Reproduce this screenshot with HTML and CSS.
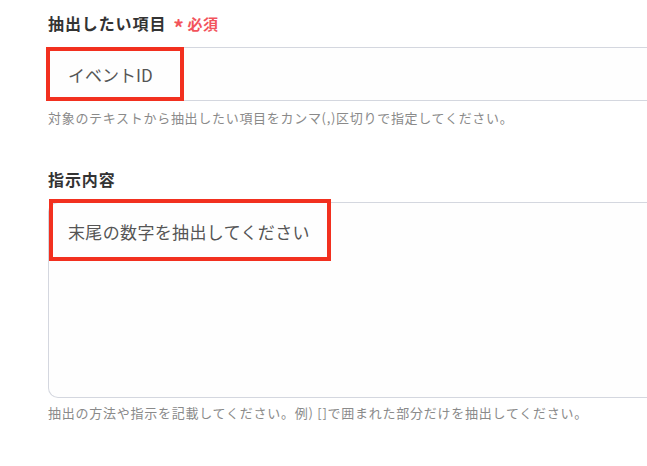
FILE: index.html
```html
<!DOCTYPE html>
<html lang="ja">
<head>
<meta charset="utf-8">
<link rel="stylesheet" href="styles.css">
</head>
<body>
<div class="form">
  <div class="field">
    <div class="label">抽出したい項目<span class="req"><span class="ast">*</span>必須</span></div>
    <div class="input">
      <span class="value">イベントID</span>
      <div class="highlight hl-input"></div>
    </div>
    <div class="help">対象のテキストから抽出したい項目をカンマ(,)区切りで指定してください。</div>
  </div>
  <div class="field field-2">
    <div class="label">指示内容</div>
    <div class="textarea">
      <span class="value value-area">末尾の数字を抽出してください</span>
      <div class="highlight hl-area"></div>
    </div>
    <div class="help help-2">抽出の方法や指示を記載してください。例) []で囲まれた部分だけを抽出してください。</div>
  </div>
</div>
</body>
</html>
```
FILE: styles.css
```css
html, body {
  margin: 0;
  padding: 0;
  background: #ffffff;
  overflow: hidden;
}
body {
  width: 647px;
  height: 466px;
  font-family: "Noto Sans CJK JP", "Noto Sans", sans-serif;
}
.form {
  padding: 11px 0 0 48px;
  width: 599px;
  overflow: hidden;
}
.field {
  width: 640px;
}
.label {
  font-size: 16px;
  letter-spacing: 0.9px;
  line-height: 25px;
  font-weight: 700;
  color: #333333;
  display: flex;
  align-items: center;
}
.req {
  margin-left: 7px;
  font-size: 15px;
  font-weight: 700;
  color: #f2545b;
  letter-spacing: 0.5px;
  display: flex;
  align-items: center;
}
.ast {
  font-size: 21px;
  margin-right: 3px;
  line-height: 1;
  position: relative;
  top: 4px;
}
.input {
  position: relative;
  margin-top: 11px;
  height: 52px;
  border: 1px solid #d4d7df;
  border-right: none;
  border-radius: 8px 0 0 8px;
  background: #fefefe;
  display: flex;
  align-items: center;
  padding-left: 19px;
}
.value {
  font-size: 17px;
  color: #555555;
  line-height: 25px;
}
.value-area {
  letter-spacing: 0.35px;
}
.textarea {
  position: relative;
  margin-top: 10px;
  height: 178px;
  border: 1px solid #d4d7df;
  border-right: none;
  border-radius: 10px 0 0 10px;
  background: #fefefe;
  padding: 16px 0 0 19px;
}
.help {
  margin-top: 7px;
  font-size: 13px;
  letter-spacing: 0.7px;
  line-height: 20px;
  color: #8a8a8a;
  white-space: nowrap;
}
.help-2 {
  margin-top: 5px;
  letter-spacing: 0.75px;
}
.field-2 {
  margin-top: 39px;
}
.highlight {
  position: absolute;
  border: 4px solid #f2301f;
  box-sizing: border-box;
}
.hl-input {
  left: -3px;
  top: -1px;
  width: 138px;
  height: 54px;
}
.hl-area {
  left: 0px;
  top: -4px;
  width: 282px;
  height: 62px;
}
```
